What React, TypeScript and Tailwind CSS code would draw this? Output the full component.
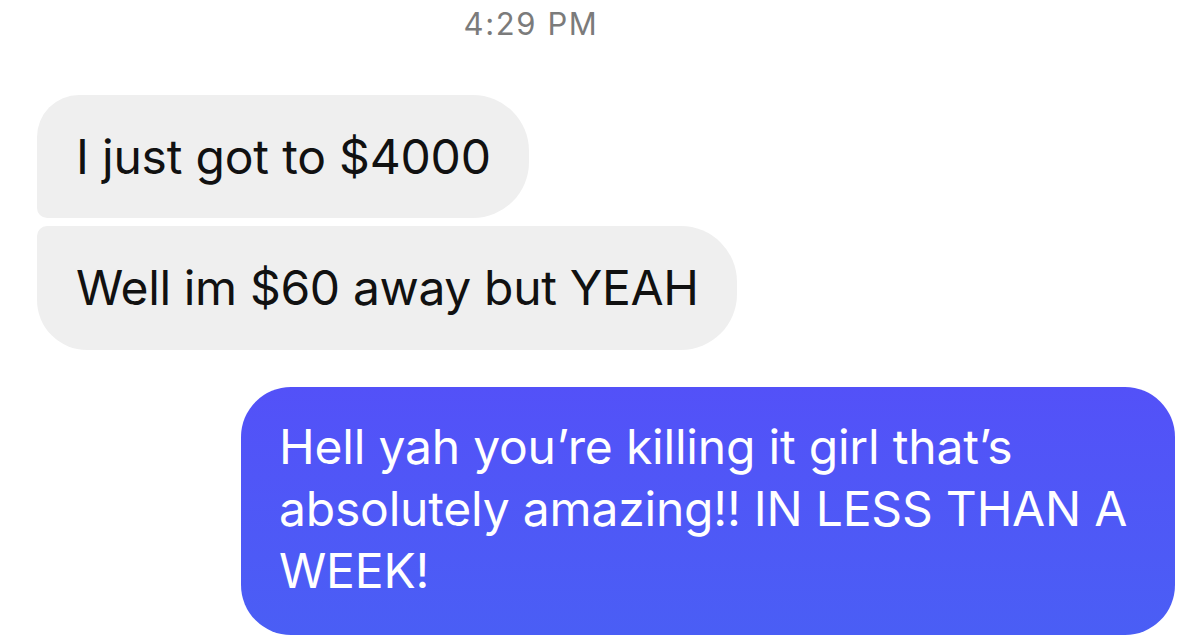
import React from "react";

export default function App() {
  return (
    <div
      className="w-[1200px] h-[637px] bg-white overflow-hidden flex flex-col"
      style={{ fontFamily: "Inter, 'Liberation Sans', Arial, sans-serif" }}
    >
      <div className="w-[1062px] h-[48px] flex items-center justify-center text-[31px] leading-[36px] text-[#7b7b7b] tracking-[1.6px]">
        4:29 PM
      </div>
      <div className="mt-[47px] ml-[37px] flex flex-col gap-[8px] items-start">
        <div className="h-[123px] flex items-center pl-[39px] pr-[38px] bg-[#efefef] rounded-tl-[42px] rounded-tr-[56px] rounded-br-[56px] rounded-bl-[10px] text-[48px] text-[#111] leading-none tracking-[-0.2px]">
          I just got to $4000
        </div>
        <div className="h-[124px] flex items-center pl-[39px] pr-[38px] bg-[#efefef] rounded-tl-[10px] rounded-tr-[56px] rounded-br-[56px] rounded-bl-[50px] text-[48px] text-[#111] leading-none tracking-[-0.35px]">
          Well im $60 away but YEAH
        </div>
      </div>
      <div className="mt-[37px] ml-[241px] w-[934px] h-[248px] bg-gradient-to-b from-[#5351f8] to-[#4a5ef5] rounded-[50px] pl-[38px] pr-[30px] pt-[29px] text-white text-[48px] leading-[62px] tracking-[-0.2px]">
        <div className="whitespace-nowrap">Hell yah you’re killing it girl that’s</div>
        <div className="whitespace-nowrap">absolutely amazing!! IN LESS THAN A</div>
        <div className="whitespace-nowrap">WEEK!</div>
      </div>
    </div>
  );
}
